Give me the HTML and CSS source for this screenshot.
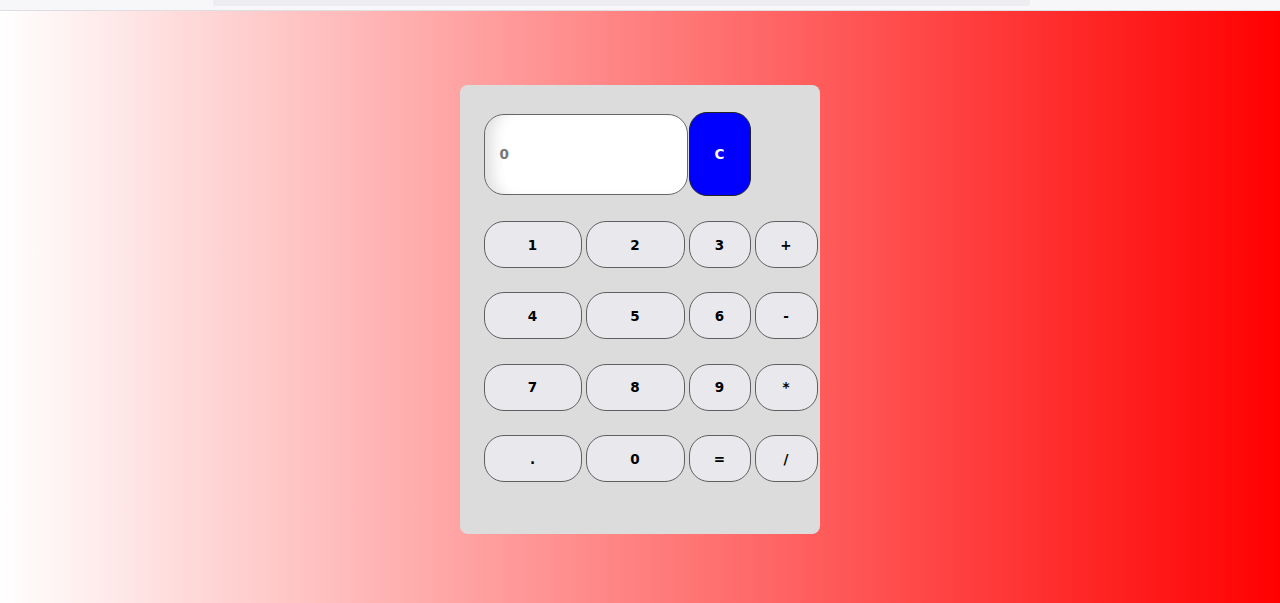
FILE: index.html
```html
<!DOCTYPE html>
<html lang="en">
<head>
<meta charset="utf-8">
<title>Calculator</title>
<link rel="stylesheet" href="styles.css">
</head>
<body>
<div class="chrome"><div class="chrome-bar"></div></div>
<main class="page">
  <div class="calc">
    <div class="top-row">
      <div class="display">0</div>
      <button class="key key-clear">C</button>
    </div>
    <div class="row">
      <button class="key wide">1</button>
      <button class="key wide2">2</button>
      <button class="key narrow">3</button>
      <button class="key narrow2">+</button>
    </div>
    <div class="row">
      <button class="key wide">4</button>
      <button class="key wide2">5</button>
      <button class="key narrow">6</button>
      <button class="key narrow2">-</button>
    </div>
    <div class="row">
      <button class="key wide">7</button>
      <button class="key wide2">8</button>
      <button class="key narrow">9</button>
      <button class="key narrow2">*</button>
    </div>
    <div class="row">
      <button class="key wide">.</button>
      <button class="key wide2">0</button>
      <button class="key narrow">=</button>
      <button class="key narrow2">/</button>
    </div>
  </div>
</main>
</body>
</html>
```
FILE: styles.css
```css
* { box-sizing: border-box; }
html, body { margin: 0; padding: 0; height: 100%; }
body {
  font-family: "DejaVu Sans", Verdana, sans-serif;
  display: flex;
  flex-direction: column;
  overflow: hidden;
}
.chrome {
  height: 11px;
  flex: 0 0 11px;
  background: #f7f7f9;
  border-bottom: 1px solid #dedee2;
  padding-left: 213px;
}
.chrome-bar {
  width: 817px;
  height: 6px;
  background: #ededf1;
  border-radius: 0 0 3px 3px;
}
.page {
  flex: 1;
  background: linear-gradient(to right, #ffffff, #ff0000);
  display: flex;
  justify-content: center;
  align-items: flex-start;
  padding-top: 74px;
}
.calc {
  width: 360px;
  height: 449px;
  background: #dcdcdc;
  border-radius: 8px;
  padding: 27px 0 0 23.5px;
  display: flex;
  flex-direction: column;
}
.top-row {
  display: flex;
  align-items: center;
  gap: 1px;
  height: 84px;
  margin-bottom: 25px;
}
.display {
  width: 204px;
  height: 81px;
  background: #fff;
  border: 1px solid #666;
  border-radius: 20px;
  box-shadow: inset 16px 0 14px -8px rgba(0, 0, 0, 0.12);
  display: flex;
  align-items: center;
  padding-left: 15px;
  font-weight: bold;
  font-size: 13.5px;
  color: #777;
}
.key {
  font-family: "DejaVu Sans", Verdana, sans-serif;
  font-weight: bold;
  font-size: 13.5px;
  color: #000;
  background: #e9e9ed;
  border: 1px solid #5f5f5f;
  border-radius: 20px;
  height: 47px;
  padding: 0;
  margin: 0;
}
.key-clear {
  width: 62px;
  height: 84px;
  background: #0000ff;
  color: #fff;
  border-color: #222;
  border-radius: 18px;
}
.row {
  display: flex;
  gap: 4px;
  margin-bottom: 24.4px;
}
.wide { width: 98px; }
.wide2 { width: 99px; }
.narrow { width: 62px; }
.narrow2 { width: 63px; }
```
